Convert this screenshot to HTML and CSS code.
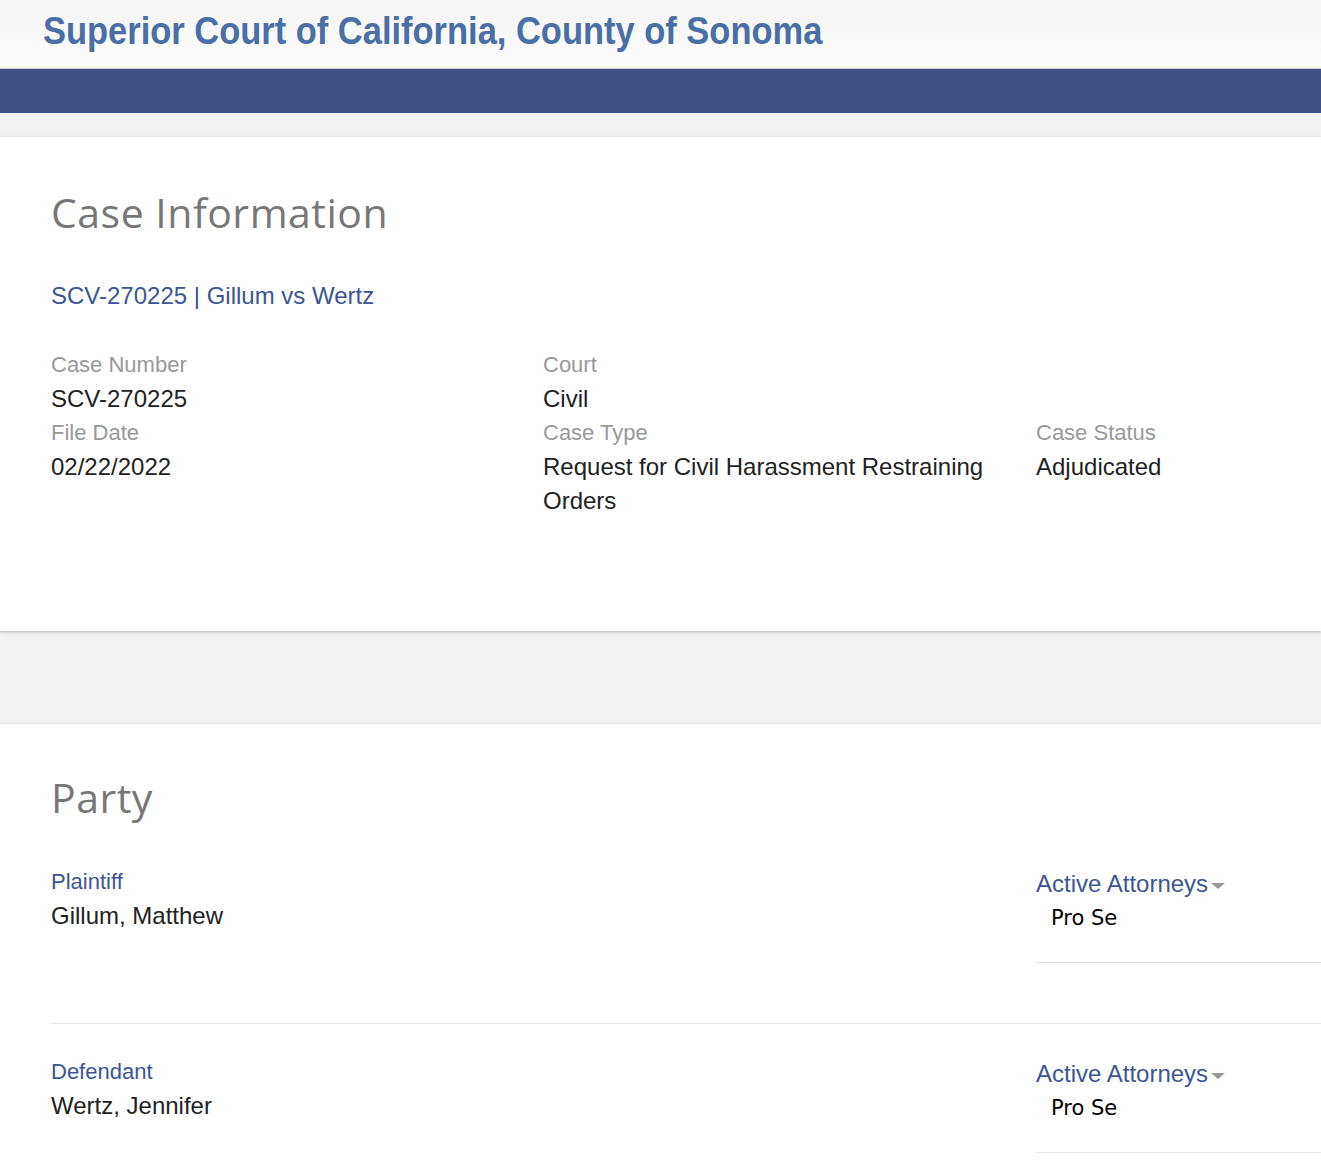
FILE: index.html
```html
<!DOCTYPE html>
<html lang="en">
<head>
    <meta charset="UTF-8">
    <title>Case Information - Superior Court of California, County of Sonoma</title>
    <link rel="stylesheet" href="styles.css">
</head>
<body>
    <header class="site-header">
        <h1 class="site-title">Superior Court of California, County of Sonoma</h1>
    </header>
    <div class="nav-band"></div>
    <div class="spacer spacer-top"></div>

    <section class="panel">
        <h2 class="panel-title">Case Information</h2>
        <p class="case-link">SCV-270225 | Gillum vs Wertz</p>

        <div class="info-grid">
            <div class="field">
                <div class="label">Case Number</div>
                <div class="value">SCV-270225</div>
            </div>
            <div class="field">
                <div class="label">Court</div>
                <div class="value">Civil</div>
            </div>
            <div class="field"></div>

            <div class="field">
                <div class="label">File Date</div>
                <div class="value">02/22/2022</div>
            </div>
            <div class="field">
                <div class="label">Case Type</div>
                <div class="value">Request for Civil Harassment Restraining Orders</div>
            </div>
            <div class="field">
                <div class="label">Case Status</div>
                <div class="value">Adjudicated</div>
            </div>
        </div>
    </section>

    <div class="spacer spacer-mid"></div>

    <section class="panel panel-party">
        <h2 class="panel-title">Party</h2>

        <div class="party-row">
            <div class="party-main">
                <div class="party-type">Plaintiff</div>
                <div class="value">Gillum, Matthew</div>
            </div>
            <div></div>
            <div class="attorneys">
                <div class="attorneys-toggle">Active Attorneys<span class="caret"></span></div>
                <div class="attorney-name">Pro Se</div>
            </div>
        </div>

        <div class="party-row">
            <div class="party-main">
                <div class="party-type">Defendant</div>
                <div class="value">Wertz, Jennifer</div>
            </div>
            <div></div>
            <div class="attorneys">
                <div class="attorneys-toggle">Active Attorneys<span class="caret"></span></div>
                <div class="attorney-name">Pro Se</div>
            </div>
        </div>
    </section>
</body>
</html>
```

FILE: styles.css
```css
html, body {
    overflow-x: hidden;
}

body {
    margin: 0;
    font-family: "Liberation Sans", Arial, sans-serif;
    background: #f1f1f1;
    color: #222;
}

.site-header {
    height: 68px;
    background: linear-gradient(#f5f5f5, #fdfdfd);
    border-bottom: 1px solid #cfcfcf;
    padding-left: 43px;
}

/* no narrow face installed, so squeeze the bold one */
.site-title {
    display: inline-block;
    margin: 0;
    font-weight: bold;
    font-size: 38px;
    line-height: 62px;
    color: #4a6ea6;
    white-space: nowrap;
    transform: scaleX(0.907);
    transform-origin: left center;
}

.nav-band {
    height: 44px;
    background: #415289;
}

.spacer {
    background: #f1f1f1;
}

.spacer-top {
    height: 24px;
}

.spacer-mid {
    height: 93px;
}

.panel {
    background: #fff;
    padding: 51px 0 113px 51px;
    box-shadow: 0 1px 3px rgba(0, 0, 0, 0.25);
    position: relative;
}

.panel-title {
    margin: 0;
    font-family: "Open Sans", "Noto Sans", sans-serif;
    font-weight: normal;
    font-size: 41px;
    line-height: 48px;
    letter-spacing: 0.5px;
    color: #777;
}

.case-link {
    margin: 45px 0 0;
    font-size: 24px;
    line-height: 30px;
    color: #3d5596;
}

.info-grid {
    display: grid;
    grid-template-columns: 492px 493px 1fr;
    margin-top: 37px;
}

.field {
    padding-right: 30px;
}

.label {
    font-size: 22px;
    line-height: 34px;
    color: #999;
}

.value {
    font-size: 24px;
    line-height: 34px;
    color: #222;
}

.panel-party {
    padding-top: 49px;
    padding-bottom: 0;
    min-height: 420px;
}

.party-row {
    display: grid;
    grid-template-columns: 492px 493px 1fr;
    border-bottom: 1px solid #e6e6e6;
    padding-top: 44px;
    height: 158px;
}

.party-row + .party-row {
    padding-top: 31px;
}

.party-type {
    font-size: 22px;
    line-height: 34px;
    color: #3d5596;
}

.attorneys {
    border-bottom: 1px solid #e6e6e6;
    padding-top: 3px;
    height: 94px;
}

.attorneys-toggle {
    font-size: 24px;
    line-height: 32px;
    color: #3d5596;
}

.caret {
    display: inline-block;
    margin-left: 3px;
    vertical-align: middle;
    border-left: 7px solid transparent;
    border-right: 7px solid transparent;
    border-top: 6px solid #999;
}

.attorney-name {
    margin-top: 2px;
    padding-left: 15px;
    font-family: "DejaVu Sans", "Noto Sans", sans-serif;
    font-size: 21px;
    line-height: 32px;
    color: #000;
}
```
